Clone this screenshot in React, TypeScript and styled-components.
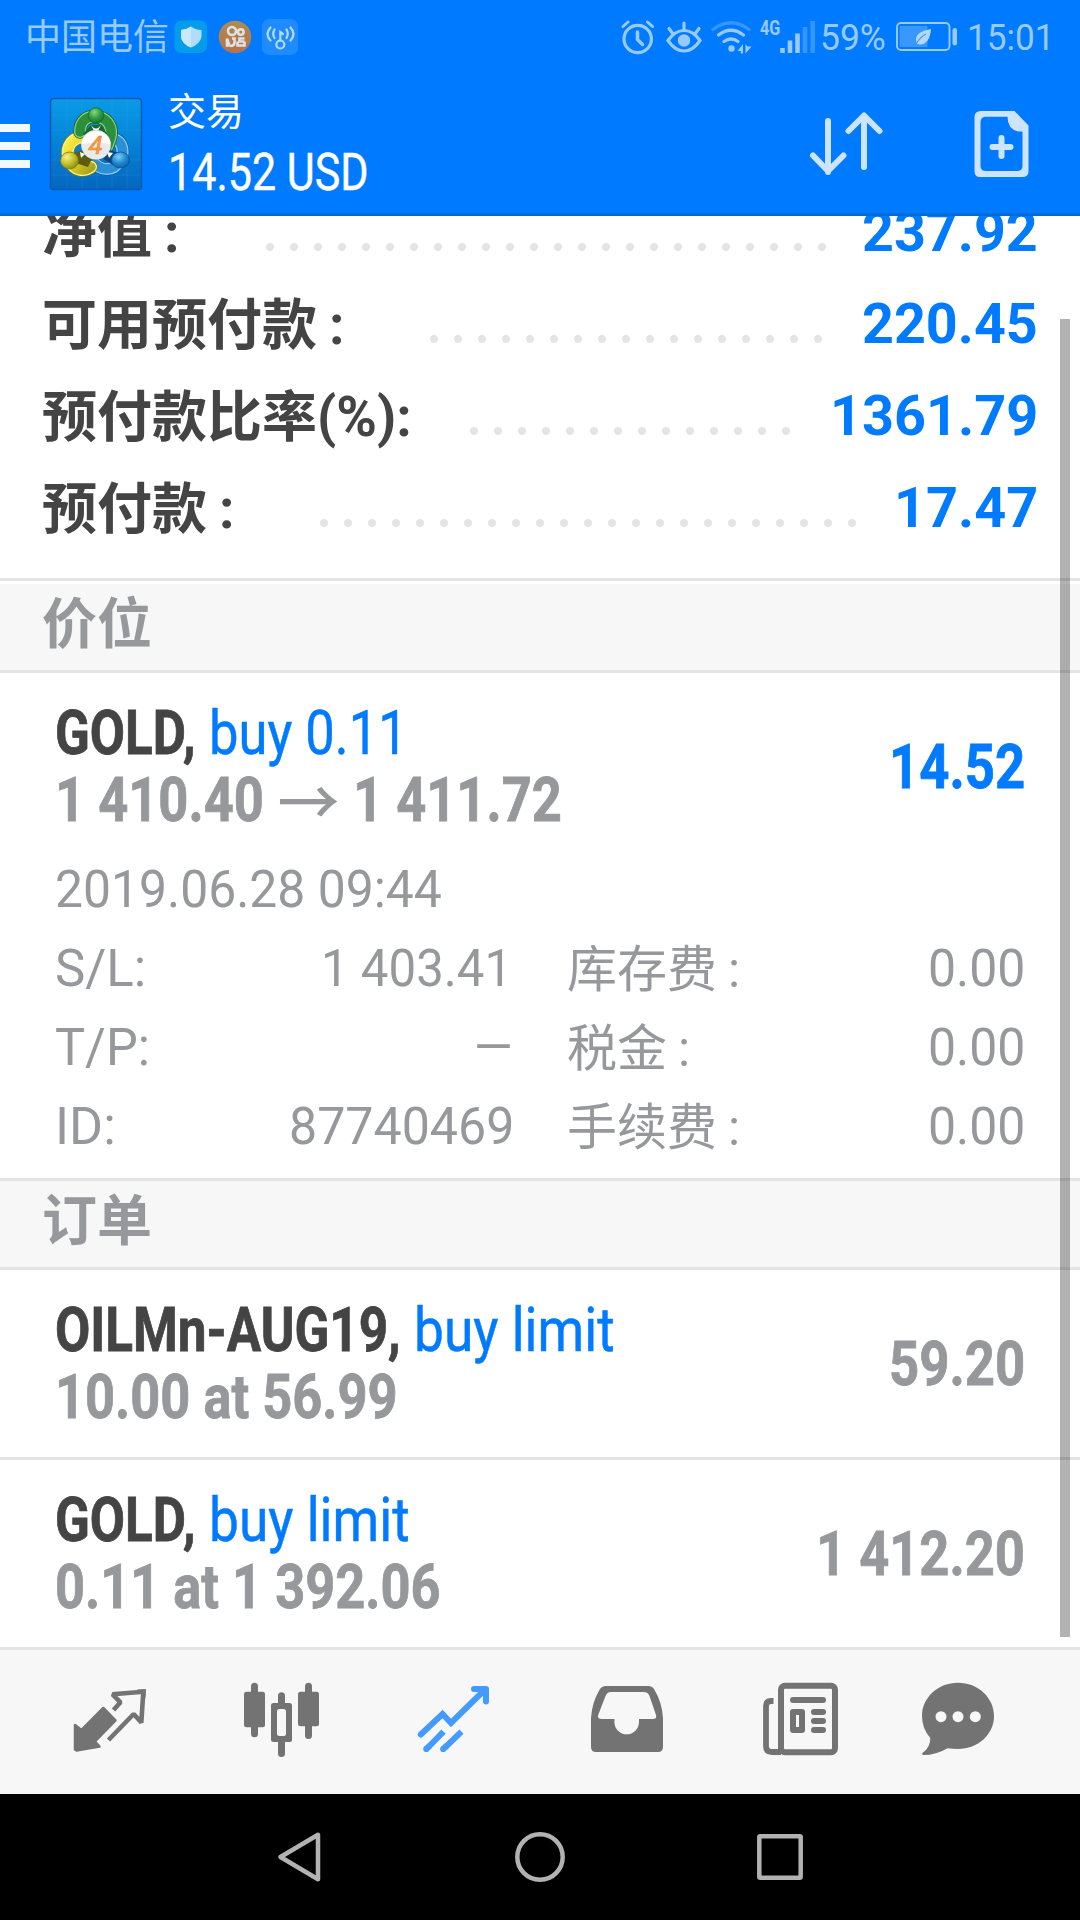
import React, { FC, ReactNode, useLayoutEffect, useRef, useState } from 'react';
import styled, { createGlobalStyle } from 'styled-components';

const color = {
  primary: '#007aff',
  active: '#439bff',
  text: '#444444',
  muted: '#97989c',
  icon: '#737373',
  line: '#e4e4e4',
  panel: '#f7f7f7',
};

type FitProps = {
  width: number;
  children: ReactNode;
};

// Squeezes a run of text to a fixed width, used for the condensed face.
const Fit: FC<FitProps> = ({ width, children }) => {
  const ref = useRef<HTMLSpanElement>(null);
  const [scale, setScale] = useState(1);

  useLayoutEffect(() => {
    if (ref.current) setScale(width / ref.current.offsetWidth);
  }, [width, children]);

  return (
    <FitBox $width={width}>
      <FitText ref={ref} style={{ transform: `scaleX(${scale})` }}>
        {children}
      </FitText>
    </FitBox>
  );
};

const summary = [
  { label: '净值', wide: true, value: '237.92', dots: 24, inset: 28, width: 176 },
  { label: '可用预付款', wide: true, value: '220.45', dots: 17, inset: 32, width: 176 },
  { label: '预付款比率(%)', wide: false, value: '1361.79', dots: 14, inset: 32, width: 208 },
  { label: '预付款', wide: true, value: '17.47', dots: 23, inset: 30, width: 144 },
];

const details = [
  { label: 'S/L:', labelWidth: 91, value: '1 403.41', width: 191, inset: 3, fee: '库存费' },
  { label: 'T/P:', labelWidth: 95, value: '–', width: 43, inset: 0, fee: '税金' },
  { label: 'ID:', labelWidth: 61, value: '87740469', width: 225, inset: 1, fee: '手续费' },
];

const orders = [
  {
    symbol: 'OILMn-AUG19,',
    symbolWidth: 346,
    info: '10.00 at 56.99',
    infoWidth: 343,
    price: '59.20',
    priceWidth: 136,
  },
  {
    symbol: 'GOLD,',
    symbolWidth: 141,
    info: '0.11 at 1 392.06',
    infoWidth: 386,
    price: '1 412.20',
    priceWidth: 209,
  },
];

const AppLogo = () => (
  <svg width="94" height="94" viewBox="-1 -1 94 94">
    <defs>
      <linearGradient id="tile" x1="0" y1="0" x2="0" y2="1">
        <stop offset="0" stopColor="#0a9be6" />
        <stop offset="0.55" stopColor="#0480d6" />
        <stop offset="1" stopColor="#0566bd" />
      </linearGradient>
      <radialGradient id="green" cx="0.4" cy="0.3" r="0.8">
        <stop offset="0" stopColor="#8ad87a" />
        <stop offset="0.5" stopColor="#2d9b45" />
        <stop offset="1" stopColor="#116a2c" />
      </radialGradient>
      <radialGradient id="yellow" cx="0.35" cy="0.3" r="0.8">
        <stop offset="0" stopColor="#f4f08a" />
        <stop offset="0.5" stopColor="#c6c12a" />
        <stop offset="1" stopColor="#7c8217" />
      </radialGradient>
      <radialGradient id="blue" cx="0.4" cy="0.3" r="0.8">
        <stop offset="0" stopColor="#7fd0f7" />
        <stop offset="0.5" stopColor="#1f8bd3" />
        <stop offset="1" stopColor="#0b559c" />
      </radialGradient>
      <linearGradient id="yellowBody" x1="0" y1="0" x2="1" y2="1">
        <stop offset="0" stopColor="#fdf04a" />
        <stop offset="0.5" stopColor="#e0cf1e" />
        <stop offset="1" stopColor="#a9a51c" />
      </linearGradient>
    </defs>
    <rect x="0.5" y="0.5" width="91" height="91" rx="3" fill="url(#tile)" stroke="#0a58b4" strokeWidth="1.6" />
    <path d="M17 1V91M32 1V91M47 1V91M62 1V91M77 1V91M1 17H91M1 32H91M1 62H91M1 77H91" stroke="#3cb4f2" strokeOpacity="0.16" />
    <g fill="none" strokeLinecap="round">
      <path d="M64 41C74 44 74 56 70 62C64 74 50 74 42 62" stroke="#0d5ea8" strokeWidth="13.5" />
      <path d="M64 41C74 44 74 56 70 62C64 74 50 74 42 62" stroke="#8fd0f5" strokeWidth="12" />
      <path d="M64 41C74 44 74 56 70 62C64 74 50 74 42 62" stroke="#2a8fd6" strokeWidth="9.5" />
      <path d="M32 39C18 41 15 54 20 63C24 73 34 74 41 69" stroke="#6f7a1a" strokeWidth="13.5" />
      <path d="M32 39C18 41 15 54 20 63C24 73 34 74 41 69" stroke="#f8f3a0" strokeWidth="12" />
      <path d="M32 39C18 41 15 54 20 63C24 73 34 74 41 69" stroke="url(#yellowBody)" strokeWidth="9.5" />
      <path d="M30 34C30 22 38 18 46 19C56 19 62 27 61 37C60 43 58 46 57 49" stroke="#135f27" strokeWidth="13.5" />
      <path d="M30 34C30 22 38 18 46 19C56 19 62 27 61 37C60 43 58 46 57 49" stroke="#8fd07e" strokeWidth="12" />
      <path d="M30 34C30 22 38 18 46 19C56 19 62 27 61 37C60 43 58 46 57 49" stroke="#2c8f3c" strokeWidth="9.5" />
    </g>
    <path d="M33 36L41 27H51L58 37L46 46Z" fill="#17692f" />
    <path d="M41 27Q46 34 51 27L48.5 32H43.5Z" fill="#e9f6e4" />
    <path d="M24 55L33 52L42 61L38 69L28 66Z" fill="#5d5c10" />
    <path d="M53 61L60 52L69 55L63 67Z" fill="#0c467f" />
    <path d="M30 54L35 56L31 60ZM57 54L63 55L59 60Z" fill="#fff" />
    <circle cx="46" cy="17.5" r="7.8" fill="url(#green)" stroke="#146c2d" strokeWidth="0.8" />
    <ellipse cx="19.5" cy="62.5" rx="9" ry="8.5" fill="url(#yellow)" stroke="#7a7a14" strokeWidth="0.8" />
    <ellipse cx="70.5" cy="62" rx="9" ry="8" fill="url(#blue)" stroke="#0c4f94" strokeWidth="0.8" />
    <circle cx="46" cy="46.8" r="14.8" fill="#eaeaec" />
    <path d="M31.5 46A14.8 14.8 0 0 1 60.8 46Q46 43 31.5 46Z" fill="#fff" />
    <text x="45.5" y="55.8" textAnchor="middle" fontFamily="Roboto, sans-serif" fontStyle="italic" fontSize="26" fill="#f6a04a" stroke="#ee8a35" strokeWidth="0.7">
      4
    </text>
  </svg>
);

const ShieldIcon = () => (
  <svg width="34" height="34" viewBox="0 0 34 34">
    <rect x="0.5" y="0.5" width="32.5" height="32.5" rx="7" fill="#049ceb" />
    <path d="M17 6.5Q22 10 27.5 10V17Q26 24 17 27.5Q8 24 7 17V10Q12 10 17 6.5Z" fill="#b2dcfb" />
    <path d="M17 6.5Q12 10 7 10V17Q8 24 17 27.5Z" fill="#c9e7fd" />
  </svg>
);

const VideoIcon = () => (
  <svg width="34" height="34" viewBox="0 0 34 34">
    <defs>
      <linearGradient id="coin" x1="0" y1="0" x2="0" y2="1">
        <stop offset="0" stopColor="#b08c4c" />
        <stop offset="1" stopColor="#b6714f" />
      </linearGradient>
    </defs>
    <circle cx="17" cy="17" r="16.3" fill="url(#coin)" />
    <g fill="none" stroke="#dde2e6" strokeWidth="2.6">
      <circle cx="14" cy="11" r="4" />
      <circle cx="22.8" cy="12" r="2.8" />
      <path d="M9 18.5V25.5H11.5L9 18.5M14 18.5H16.5V23Q16 26 12.5 26" />
      <path d="M26.5 18.5H21.5V21.5H26.5M19.5 21.5V25.5H26.5V21.5" />
    </g>
  </svg>
);

const HotspotIcon = () => (
  <svg width="36" height="36" viewBox="0 0 36 36">
    <rect width="36" height="36" rx="7" fill="#1f8bff" />
    <g fill="none" stroke="#b4dcff" strokeWidth="2.2" strokeLinecap="round">
      <circle cx="18.3" cy="25.5" r="4" />
      <path d="M18.3 21.5V13L21 15" />
      <path d="M12.5 10.5Q10 15 12.5 19M8.5 8.5Q2.5 15 8.5 21.5M24.5 10.5Q27 15 24.5 19M28.5 8.5Q34.5 15 28.5 21.5" />
    </g>
  </svg>
);

const AlarmIcon = () => (
  <svg width="34" height="36" viewBox="0 0 34 36" fill="none" stroke="currentColor" strokeWidth="3.2" strokeLinecap="round">
    <circle cx="16.7" cy="20" r="13.7" />
    <path d="M16.5 13V20.5L21.5 25.5" strokeWidth="3.5" />
    <path d="M2 7.5L7 3M26.5 3L31.5 7.5" strokeWidth="3" />
  </svg>
);

const EyeIcon = () => (
  <svg width="36" height="36" viewBox="0 0 36 36" fill="none" stroke="currentColor" strokeWidth="3.2" strokeLinecap="round">
    <path d="M2 21.5Q9 11.5 18 11.5Q27 11.5 34 21.5Q27 32 18 32Q9 32 2 21.5Z" />
    <path d="M3 9.5L7 15M18 4V11M33 9.5L29 15" />
    <circle cx="18" cy="21.5" r="6.2" fill="currentColor" stroke="none" />
  </svg>
);

const WifiIcon = () => (
  <svg width="42" height="36" viewBox="0 0 42 36" fill="none" stroke="currentColor" strokeWidth="3.2" strokeLinecap="round">
    <path d="M2 10.5Q20 -3 38 10.5" strokeOpacity="0.35" />
    <path d="M7.5 16Q20 6.5 32.5 16" />
    <path d="M13 22.5Q20 17.5 27 22.5" />
    <circle cx="20.5" cy="29.5" r="3.2" fill="currentColor" stroke="none" />
    <path d="M32 25V34.5H29.8V32H26.5ZM34.5 34.5V25L36.5 27.5H40.5Z" fill="currentColor" stroke="none" />
  </svg>
);

const SignalIcon = () => (
  <svg width="36" height="36" viewBox="0 0 36 36" fill="none" stroke="currentColor" strokeWidth="4.6">
    <path d="M2.5 29V34M10 21.5V34M17.5 14.5V34" />
    <path d="M25 8V34M32.7 2V34" strokeOpacity="0.35" />
  </svg>
);

const BatteryIcon = () => (
  <svg width="62" height="30" viewBox="0 0 62 30">
    <rect x="1" y="1" width="52.5" height="27" rx="4" fill="none" stroke="currentColor" strokeWidth="1.9" />
    <rect x="3.5" y="4" width="28" height="21" rx="1" fill="#3a97ff" />
    <rect x="56.5" y="6" width="4.5" height="17.5" rx="2.2" fill="currentColor" />
    <path d="M35 7Q34 21 25 22.5Q22 23 20.5 21Q17 10 35 7Z" fill="#b2d8ff" />
    <path d="M19 23.5Q24 15 30 12" stroke="#3a97ff" strokeWidth="1.2" fill="none" />
  </svg>
);

const SortIcon = () => (
  <svg width="76" height="66" viewBox="0 0 76 66" fill="none" stroke="currentColor" strokeWidth="6" strokeLinecap="round" strokeLinejoin="round">
    <path d="M19 10V61M4 44.5L19 60L34.5 44.5" />
    <path d="M55 56V6M39.5 20L55 4.5L70.5 20" />
  </svg>
);

const NewOrderIcon = () => (
  <svg width="56" height="68" viewBox="0 0 56 68">
    <path
      d="M7 1H40.5L54.5 15.5V61Q54.5 67 48.5 67H6Q0.5 67 0.5 61V7Q0.5 1 7 1ZM12 6.8Q6.5 6.8 6.5 12.5V56Q6.5 61 12 61H43Q48.5 61 48.5 56V21.5H44Q33.5 19 33.5 6.8Z"
      fill="currentColor"
      fillRule="evenodd"
    />
    <path d="M27.5 28V46M18.5 37H36.5" stroke="currentColor" strokeWidth="6" strokeLinecap="round" />
  </svg>
);

const TabSvg = styled.svg.attrs({ width: 76, height: 80, viewBox: '0 0 76 80' })`
  display: block;
  overflow: visible;
`;

const QuotesIcon = () => (
  <TabSvg fill="none" stroke="currentColor">
    <path d="M1 45L7.5 50L29.3 28L41.5 40.3L21 61.5L25.5 66.5L2.5 70.5L1 69.5Z" fill="currentColor" strokeWidth="2.5" strokeLinejoin="round" />
    <path d="M39.5 30L46.5 22.3L38.5 14.3L69.3 11.8L67.3 42.5L59.7 34L34.5 60" strokeWidth="4.6" strokeLinejoin="bevel" />
    <path d="M63 9.5L72 9L71.5 18Z" fill="currentColor" stroke="none" />
  </TabSvg>
);

const ChartIcon = () => (
  <TabSvg fill="currentColor">
    <rect x="0" y="11.7" width="21" height="35.5" rx="2.5" />
    <rect x="7" y="2.7" width="7" height="54.5" rx="3.5" />
    <rect x="54" y="11.7" width="21" height="34.5" rx="2.5" />
    <rect x="61" y="2.7" width="7" height="56.3" rx="3.5" />
    <rect x="34" y="12.3" width="7" height="64.7" rx="3.5" />
    <rect x="27" y="23" width="21" height="39" rx="2.5" />
    <rect x="33" y="29" width="9" height="27" rx="2.5" fill={color.panel} />
  </TabSvg>
);

const TradeIcon = () => (
  <TabSvg fill="none" stroke="currentColor" strokeWidth="6" strokeLinejoin="miter">
    <path d="M2.8 54.5L24.5 34L33 43L67 9.5" strokeLinecap="round" />
    <path d="M56 9H68V21.5" strokeLinecap="round" strokeLinejoin="round" />
    <path d="M25.5 51.7L10 67.5M43.5 51.7L27 67.5" />
    <circle cx="8.3" cy="69" r="3.1" fill="currentColor" stroke="none" />
    <circle cx="25.2" cy="69" r="3.1" fill="currentColor" stroke="none" />
    <path d="M8.3 69L12 65.5M25.2 69L29 65.5" />
  </TabSvg>
);

const HistoryIcon = () => (
  <TabSvg fill="currentColor">
    <path
      d="M0 38Q1 22 9 9Q11 6 15 6H57Q61 6 63 9Q71 22 72 38V67Q72 72 67 72H5Q0 72 0 67ZM20 12Q16 12 14.5 16L7.2 35Q6 39 11 39H23.4V42A12.3 12.3 0 0 0 48 42V39H62Q66 39 65 35L58.5 16Q57 12 53 12Z"
      fillRule="evenodd"
    />
  </TabSvg>
);

const NewsIcon = () => (
  <TabSvg fill="none" stroke="currentColor">
    <rect x="18" y="5.7" width="54" height="66.5" rx="4" strokeWidth="6" />
    <path d="M10.5 21H8Q3 21 3 26V66Q3 72 9 72H18" strokeWidth="5.8" />
    <path d="M30 20H60M51 32H60M51 41H60M51 50H60" strokeWidth="6" strokeLinecap="round" />
    <rect x="30" y="32" width="9" height="18" strokeWidth="6" strokeLinejoin="round" />
  </TabSvg>
);

const ChatIcon = () => (
  <TabSvg fill="currentColor">
    <path d="M36 2.7C56 2.7 72 17.5 72 36C72 54.5 56 69 36 69Q31 69 25.5 68.2Q14 75 1.5 75Q-1 74.5 1 72.5Q8.5 67 8.3 58Q0 48.5 0 36C0 17.5 16 2.7 36 2.7Z" />
    <g fill={color.panel}>
      <circle cx="19" cy="36.7" r="5.5" />
      <circle cx="36" cy="36.7" r="5.5" />
      <circle cx="53.3" cy="36.7" r="5.5" />
    </g>
  </TabSvg>
);

const App: FC = () => {
  return (
    <Screen>
      <GlobalStyle />
      <Header>
        <StatusBar>
          <Carrier>中国电信</Carrier>
          <Notices>
            <ShieldIcon />
            <VideoIcon />
            <HotspotIcon />
          </Notices>
          <Indicators>
            <AlarmIcon />
            <EyeIcon />
            <WifiIcon />
            <Network>
              <Fit width={20}>4G</Fit>
            </Network>
            <SignalIcon />
            <Percent>
              <Fit width={66}>59%</Fit>
            </Percent>
            <BatteryIcon />
            <Clock>
              <Fit width={88}>15:01</Fit>
            </Clock>
          </Indicators>
        </StatusBar>
        <AppBar>
          <Menu>
            <MenuLine />
            <MenuLine />
            <MenuLine />
          </Menu>
          <AppLogo />
          <Titles>
            <Title>交易</Title>
            <Profit>
              <Fit width={201}>14.52 USD</Fit>
            </Profit>
          </Titles>
          <Actions>
            <SortIcon />
            <NewOrderIcon />
          </Actions>
        </AppBar>
      </Header>

      <Content>
        <Summary>
          {summary.map((row) => (
            <SummaryRow key={row.label}>
              <SummaryLabel>
                {row.label}
                <Colon $wide={row.wide}>:</Colon>
              </SummaryLabel>
              <Leader $dots={row.dots} $inset={row.inset} />
              <SummaryValue>
                <Fit width={row.width}>{row.value}</Fit>
              </SummaryValue>
            </SummaryRow>
          ))}
        </Summary>

        <SectionTitle $spaced>价位</SectionTitle>
        <Position>
          <Deal>
            <div>
              <Line>
                <Symbol>
                  <Fit width={141}>GOLD,</Fit>
                </Symbol>
                <Action>
                  <Fit width={199}>buy 0.11</Fit>
                </Action>
              </Line>
              <PriceLine>
                <Fit width={209}>1 410.40</Fit>
                <Arrow>→</Arrow>
                <Fit width={209}>1 411.72</Fit>
              </PriceLine>
            </div>
            <Amount $positive>
              <Fit width={136}>14.52</Fit>
            </Amount>
          </Deal>
          <Details>
            <DateTime>
              <Fit width={387}>2019.06.28 09:44</Fit>
            </DateTime>
            {details.map((row) => (
              <DetailRow key={row.label}>
                <Fit width={row.labelWidth}>{row.label}</Fit>
                <DetailValue $inset={row.inset}>
                  <Fit width={row.width}>{row.value}</Fit>
                </DetailValue>
                <Fee>
                  {row.fee}
                  <Colon $wide>:</Colon>
                </Fee>
                <DetailValue>
                  <Fit width={97}>0.00</Fit>
                </DetailValue>
              </DetailRow>
            ))}
          </Details>
        </Position>

        <SectionTitle>订单</SectionTitle>
        {orders.map((order) => (
          <Order key={order.symbol}>
            <Deal>
              <div>
                <Line>
                  <Symbol>
                    <Fit width={order.symbolWidth}>{order.symbol}</Fit>
                  </Symbol>
                  <Action>
                    <Fit width={201}>buy limit</Fit>
                  </Action>
                </Line>
                <PriceLine>
                  <Fit width={order.infoWidth}>{order.info}</Fit>
                </PriceLine>
              </div>
              <Amount>
                <Fit width={order.priceWidth}>{order.price}</Fit>
              </Amount>
            </Deal>
          </Order>
        ))}
        <ScrollThumb />
      </Content>

      <TabBar>
        <Tab><QuotesIcon /></Tab>
        <Tab><ChartIcon /></Tab>
        <Tab $active><TradeIcon /></Tab>
        <Tab><HistoryIcon /></Tab>
        <Tab><NewsIcon /></Tab>
        <Tab><ChatIcon /></Tab>
      </TabBar>

      <SystemBar>
        <svg width="50" height="54" viewBox="0 0 50 54">
          <path d="M5.5 27L43 4.8V49.2Z" />
        </svg>
        <svg width="54" height="54" viewBox="0 0 54 54">
          <circle cx="27" cy="27" r="22.7" />
        </svg>
        <svg width="50" height="54" viewBox="0 0 50 54">
          <rect x="4.3" y="6.3" width="41.4" height="41.4" rx="1" />
        </svg>
      </SystemBar>
    </Screen>
  );
};

export default App;

const GlobalStyle = createGlobalStyle`
  * {
    box-sizing: border-box;
  }
  body {
    margin: 0;
    background: #fff;
    font-family: Roboto, 'Noto Sans CJK SC', sans-serif;
  }
  svg {
    display: block;
    flex: none;
  }
`;

const FitBox = styled.span<{ $width: number }>`
  display: inline-block;
  flex: none;
  width: ${({ $width }) => $width}px;
  white-space: pre;
  text-align: left;
`;

const FitText = styled.span`
  display: inline-block;
  transform-origin: left center;
`;

const Screen = styled.div`
  display: flex;
  flex-direction: column;
  width: 1080px;
  height: 1920px;
  overflow: hidden;
`;

const Header = styled.header`
  flex: none;
  height: 216px;
  background: ${color.primary};
  border-bottom: 3px solid #026bdd;
`;

const StatusBar = styled.div`
  display: flex;
  align-items: center;
  height: 74px;
  padding: 0 25px;
  color: #99caff;
`;

const Carrier = styled.div`
  width: 149px;
  padding-top: 3px;
  font-size: 36px;
  line-height: 71px;
`;

const Notices = styled.div`
  display: flex;
  align-items: center;
  gap: 10px;
`;

const Indicators = styled.div`
  display: flex;
  align-items: center;
  margin-left: auto;
  font-size: 36px;
  line-height: 74px;

  svg:nth-of-type(2) {
    margin-left: 11px;
  }
  svg:nth-of-type(3) {
    margin-left: 9px;
  }
`;

const Network = styled.div`
  height: 38px;
  margin-left: 7px;
  margin-top: -6px;
  font-size: 21px;
  font-weight: 700;
  line-height: 26px;
`;

const Percent = styled.div`
  margin: 0 10px 0 4px;
  padding-top: 2px;
`;

const Clock = styled.div`
  margin-left: 9px;
  padding-top: 2px;
`;

const AppBar = styled.div`
  display: flex;
  align-items: center;
  height: 139px;
  color: #fff;
`;

const Menu = styled.div`
  display: flex;
  flex-direction: column;
  gap: 10px;
  width: 49px;
  margin-top: 5px;
`;

const MenuLine = styled.span`
  width: 30px;
  height: 8px;
  background: #f2f8ff;
`;

const Titles = styled.div`
  display: flex;
  flex-direction: column;
  margin-left: 25px;
`;

const Title = styled.div`
  font-size: 38px;
  line-height: 54px;
`;

const Profit = styled.div`
  margin: 2px 0 -2px;
  font-size: 51px;
  line-height: 64px;
  -webkit-text-stroke: 0.4px currentColor;
`;

const Actions = styled.div`
  display: flex;
  align-items: center;
  gap: 89px;
  margin-left: auto;
  padding-right: 50px;
  color: #cce4ff;
`;

const Content = styled.main`
  position: relative;
  flex: none;
  height: 1434px;
  overflow: hidden;
`;

const Summary = styled.div`
  margin-top: -30px;
  padding: 0 42px 24px;
`;

const SummaryRow = styled.div`
  display: flex;
  height: 92px;
  font-size: 55px;
  font-weight: 700;
  line-height: 92px;
  white-space: nowrap;
`;

const SummaryLabel = styled.div`
  padding-top: 1px;
  color: ${color.text};
`;

const Colon = styled.span<{ $wide?: boolean }>`
  margin-left: ${({ $wide }) => ($wide ? '0.22em' : 0)};
`;

const Leader = styled.div<{ $dots: number; $inset: number }>`
  flex: none;
  width: ${({ $dots }) => $dots * 24}px;
  height: 24px;
  margin: 49px ${({ $inset }) => $inset}px 0 auto;
  background: radial-gradient(circle at center, ${color.line} 3.6px, transparent 4.4px) 0 0 / 24px 24px;
`;

const SummaryValue = styled.div`
  color: ${color.primary};
`;

const SectionTitle = styled.div<{ $spaced?: boolean }>`
  height: ${({ $spaced }) => ($spaced ? 95 : 92)}px;
  padding-left: 42px;
  border-top: 3px solid ${color.line};
  border-bottom: 3px solid ${color.line};
  background: ${color.panel};
  box-shadow: ${({ $spaced }) => ($spaced ? 'inset 0 3px #fff' : 'none')};
  padding-top: ${({ $spaced }) => ($spaced ? 3 : 0)}px;
  color: ${color.muted};
  font-size: 55px;
  font-weight: 700;
  line-height: 81px;
`;

const Position = styled.div`
  padding: 26px 55px 12px;
`;

const Order = styled.div`
  height: 190px;
  padding: 26px 55px 0;
  border-bottom: 3px solid ${color.line};
`;

const Deal = styled.div`
  display: flex;
  align-items: center;
  justify-content: space-between;
  font-size: 62px;
  line-height: 67px;
`;

const Line = styled.div`
  display: flex;
  gap: 13px;
  height: 67px;
`;

const Symbol = styled.div`
  color: ${color.text};
  font-weight: 700;
  -webkit-text-stroke: 0.8px currentColor;
`;

const Action = styled.div`
  color: ${color.primary};
  -webkit-text-stroke: 0.5px currentColor;
`;

const PriceLine = styled.div`
  display: flex;
  height: 67px;
  color: ${color.muted};
  font-weight: 700;
  -webkit-text-stroke: 0.8px currentColor;
`;

const Arrow = styled.span`
  width: 89px;
  text-align: center;
  font-family: 'Noto Sans CJK SC', sans-serif;
  font-weight: 500;
  -webkit-text-stroke: 0;
`;

const Amount = styled.div<{ $positive?: boolean }>`
  color: ${({ $positive }) => ($positive ? color.primary : color.muted)};
  font-weight: 700;
  -webkit-text-stroke: 0.8px currentColor;
`;

const Details = styled.div`
  margin-top: 17px;
  color: ${color.muted};
  font-size: 51px;
  line-height: 79px;
`;

const DateTime = styled.div`
  height: 79px;
`;

const DetailRow = styled.div`
  display: grid;
  grid-template-columns: 160px 300px 1fr auto;
  height: 79px;
`;

const DetailValue = styled.div<{ $inset?: number }>`
  margin-right: ${({ $inset = 0 }) => $inset}px;
  text-align: right;
`;

const Fee = styled.div`
  padding: 2px 0 0 52px;
  font-size: 50px;
`;

const ScrollThumb = styled.div`
  position: absolute;
  top: 103px;
  right: 10px;
  width: 10px;
  height: 1318px;
  background: rgba(0, 0, 0, 0.3);
`;

const TabBar = styled.nav`
  display: grid;
  flex: none;
  grid-template-columns: 170px 174px 173px 172px 159px 76px;
  height: 144px;
  padding: 30px 0 0 74px;
  background: ${color.panel};
`;

const Tab = styled.div<{ $active?: boolean }>`
  color: ${({ $active }) => ($active ? color.active : color.icon)};
`;

const SystemBar = styled.div`
  display: flex;
  flex: 1;
  align-items: center;
  justify-content: space-between;
  padding: 0 275px;
  background: #000;
  fill: none;
  stroke: #b2b2b2;
  stroke-width: 4.5;
  stroke-linejoin: round;
`;
